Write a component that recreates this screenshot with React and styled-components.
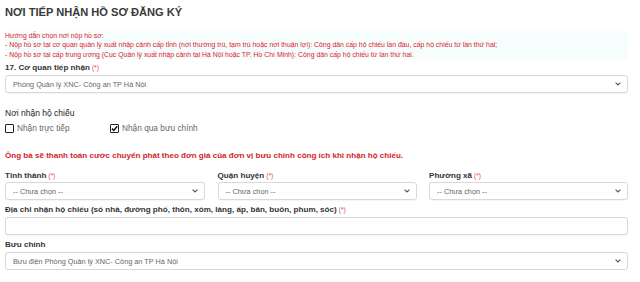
import styled, { createGlobalStyle } from "styled-components";

const GlobalStyle = createGlobalStyle`
  html, body {
    margin: 0;
    padding: 0;
    background: #fff;
  }
  body {
    font-family: "Liberation Sans", Arial, sans-serif;
    color: #333;
  }
`;

const Page = styled.div`
  width: 640px;
  padding: 5px 12px 0 5px;
  box-sizing: border-box;
`;

const Title = styled.h2`
  margin: 0;
  font-size: 11.1px;
  line-height: 14px;
  font-weight: 700;
  color: #3a3a3a;
`;

const Hint = styled.div`
  margin-top: 12px;
  font-size: 6.9px;
  line-height: 9.4px;
  color: #e0202a;
  background: #f6fdfd;
`;

const Label = styled.div`
  font-size: ${(p) => (p.$bold ? 8.1 : 8.5)}px;
  line-height: 11px;
  font-weight: ${(p) => (p.$bold ? 700 : 400)};
  color: ${(p) => (p.$bold ? "#333" : "#222")};
  margin-top: ${(p) => p.$top || 0}px;
  margin-bottom: ${(p) => (p.$bottom === undefined ? 2 : p.$bottom)}px;
`;

const Req = styled.span`
  color: #e24a4a;
  font-weight: 400;
  font-size: 6.6px;
  margin-left: 2px;
`;

const Field = styled.div`
  height: 18px;
  border: 1px solid #d9d9d9;
  border-radius: 3px;
  box-sizing: border-box;
  display: flex;
  align-items: center;
  justify-content: space-between;
  padding: 0 6px 0 7px;
  font-size: 7.3px;
  color: #666;
  background: #fff;
  box-shadow: 0 1px 1px rgba(0, 0, 0, 0.04);
`;

const Chevron = () => (
  <svg width="6" height="4" viewBox="0 0 6 4">
    <path d="M0.6 0.6 L3 3 L5.4 0.6" stroke="#555" strokeWidth="1.1" fill="none" />
  </svg>
);

const Select = ({ children }) => (
  <Field>
    <span>{children}</span>
    <Chevron />
  </Field>
);

const Options = styled.div`
  display: flex;
  align-items: center;
  margin-top: 4px;
`;

const Option = styled.label`
  display: flex;
  align-items: center;
  gap: 3px;
  width: ${(p) => p.$w}px;
  font-size: 8.3px;
  color: #666;
`;

const Box = styled.span`
  width: 9px;
  height: 9px;
  border: 1.2px solid #222;
  border-radius: 1px;
  box-sizing: border-box;
  display: flex;
  align-items: center;
  justify-content: center;
`;

const Check = ({ checked }) => (
  <Box>
    {checked && (
      <svg width="7" height="7" viewBox="0 0 7 7">
        <path d="M1 3.6 L2.8 5.4 L6.2 1.2" stroke="#111" strokeWidth="1.5" fill="none" />
      </svg>
    )}
  </Box>
);

const Note = styled.div`
  margin-top: 17px;
  font-size: 8.05px;
  line-height: 11px;
  font-weight: 700;
  color: #d0242c;
`;

const Row = styled.div`
  display: grid;
  grid-template-columns: 200px 1fr 1fr;
  column-gap: 12.5px;
  margin-top: 9px;
`;

const Col = styled.div``;

const App = () => (
  <Page>
    <GlobalStyle />
    <Title>NƠI TIẾP NHẬN HỒ SƠ ĐĂNG KÝ</Title>
    <Hint>
      <div>Hướng dẫn chọn nơi nộp hồ sơ:</div>
      <div>
        - Nộp hồ sơ tại cơ quan quản lý xuất nhập cảnh cấp tỉnh (nơi thường trú, tạm trú hoặc nơi thuận lợi): Công dân cấp hộ chiếu lần đầu, cấp hộ chiếu từ lần thứ hai;
      </div>
      <div>
        - Nộp hồ sơ tại cấp trung ương (Cục Quản lý xuất nhập cảnh tại Hà Nội hoặc TP. Hồ Chí Minh): Công dân cấp hộ chiếu từ lần thứ hai.
      </div>
    </Hint>
    <Label $bold $top={3}>
      17. Cơ quan tiếp nhận<Req>(*)</Req>
    </Label>
    <Select>Phòng Quản lý XNC- Công an TP Hà Nội</Select>

    <Label $top={15}>Nơi nhận hộ chiếu</Label>
    <Options>
      <Option $w={105}>
        <Check />
        Nhận trực tiếp
      </Option>
      <Option $w={150}>
        <Check checked />
        Nhận qua bưu chính
      </Option>
    </Options>

    <Note>Ông bà sẽ thanh toán cước chuyển phát theo đơn giá của đơn vị bưu chính công ích khi nhận hộ chiếu.</Note>

    <Row>
      <Col>
        <Label $bold $bottom={1}>
          Tỉnh thành<Req>(*)</Req>
        </Label>
        <Select>-- Chưa chọn --</Select>
      </Col>
      <Col>
        <Label $bold $bottom={1}>
          Quận huyện<Req>(*)</Req>
        </Label>
        <Select>-- Chưa chọn --</Select>
      </Col>
      <Col>
        <Label $bold $bottom={1}>
          Phường xã<Req>(*)</Req>
        </Label>
        <Select>-- Chưa chọn --</Select>
      </Col>
    </Row>

    <Label $bold $top={4}>
      Địa chỉ nhận hộ chiếu (số nhà, đường phố, thôn, xóm, làng, ấp, bản, buôn, phum, sóc)<Req>(*)</Req>
    </Label>
    <Field />

    <Label $bold $top={4}>Bưu chính</Label>
    <Select>Bưu điện Phòng Quản lý XNC- Công an TP Hà Nội</Select>
  </Page>
);

export default App;
